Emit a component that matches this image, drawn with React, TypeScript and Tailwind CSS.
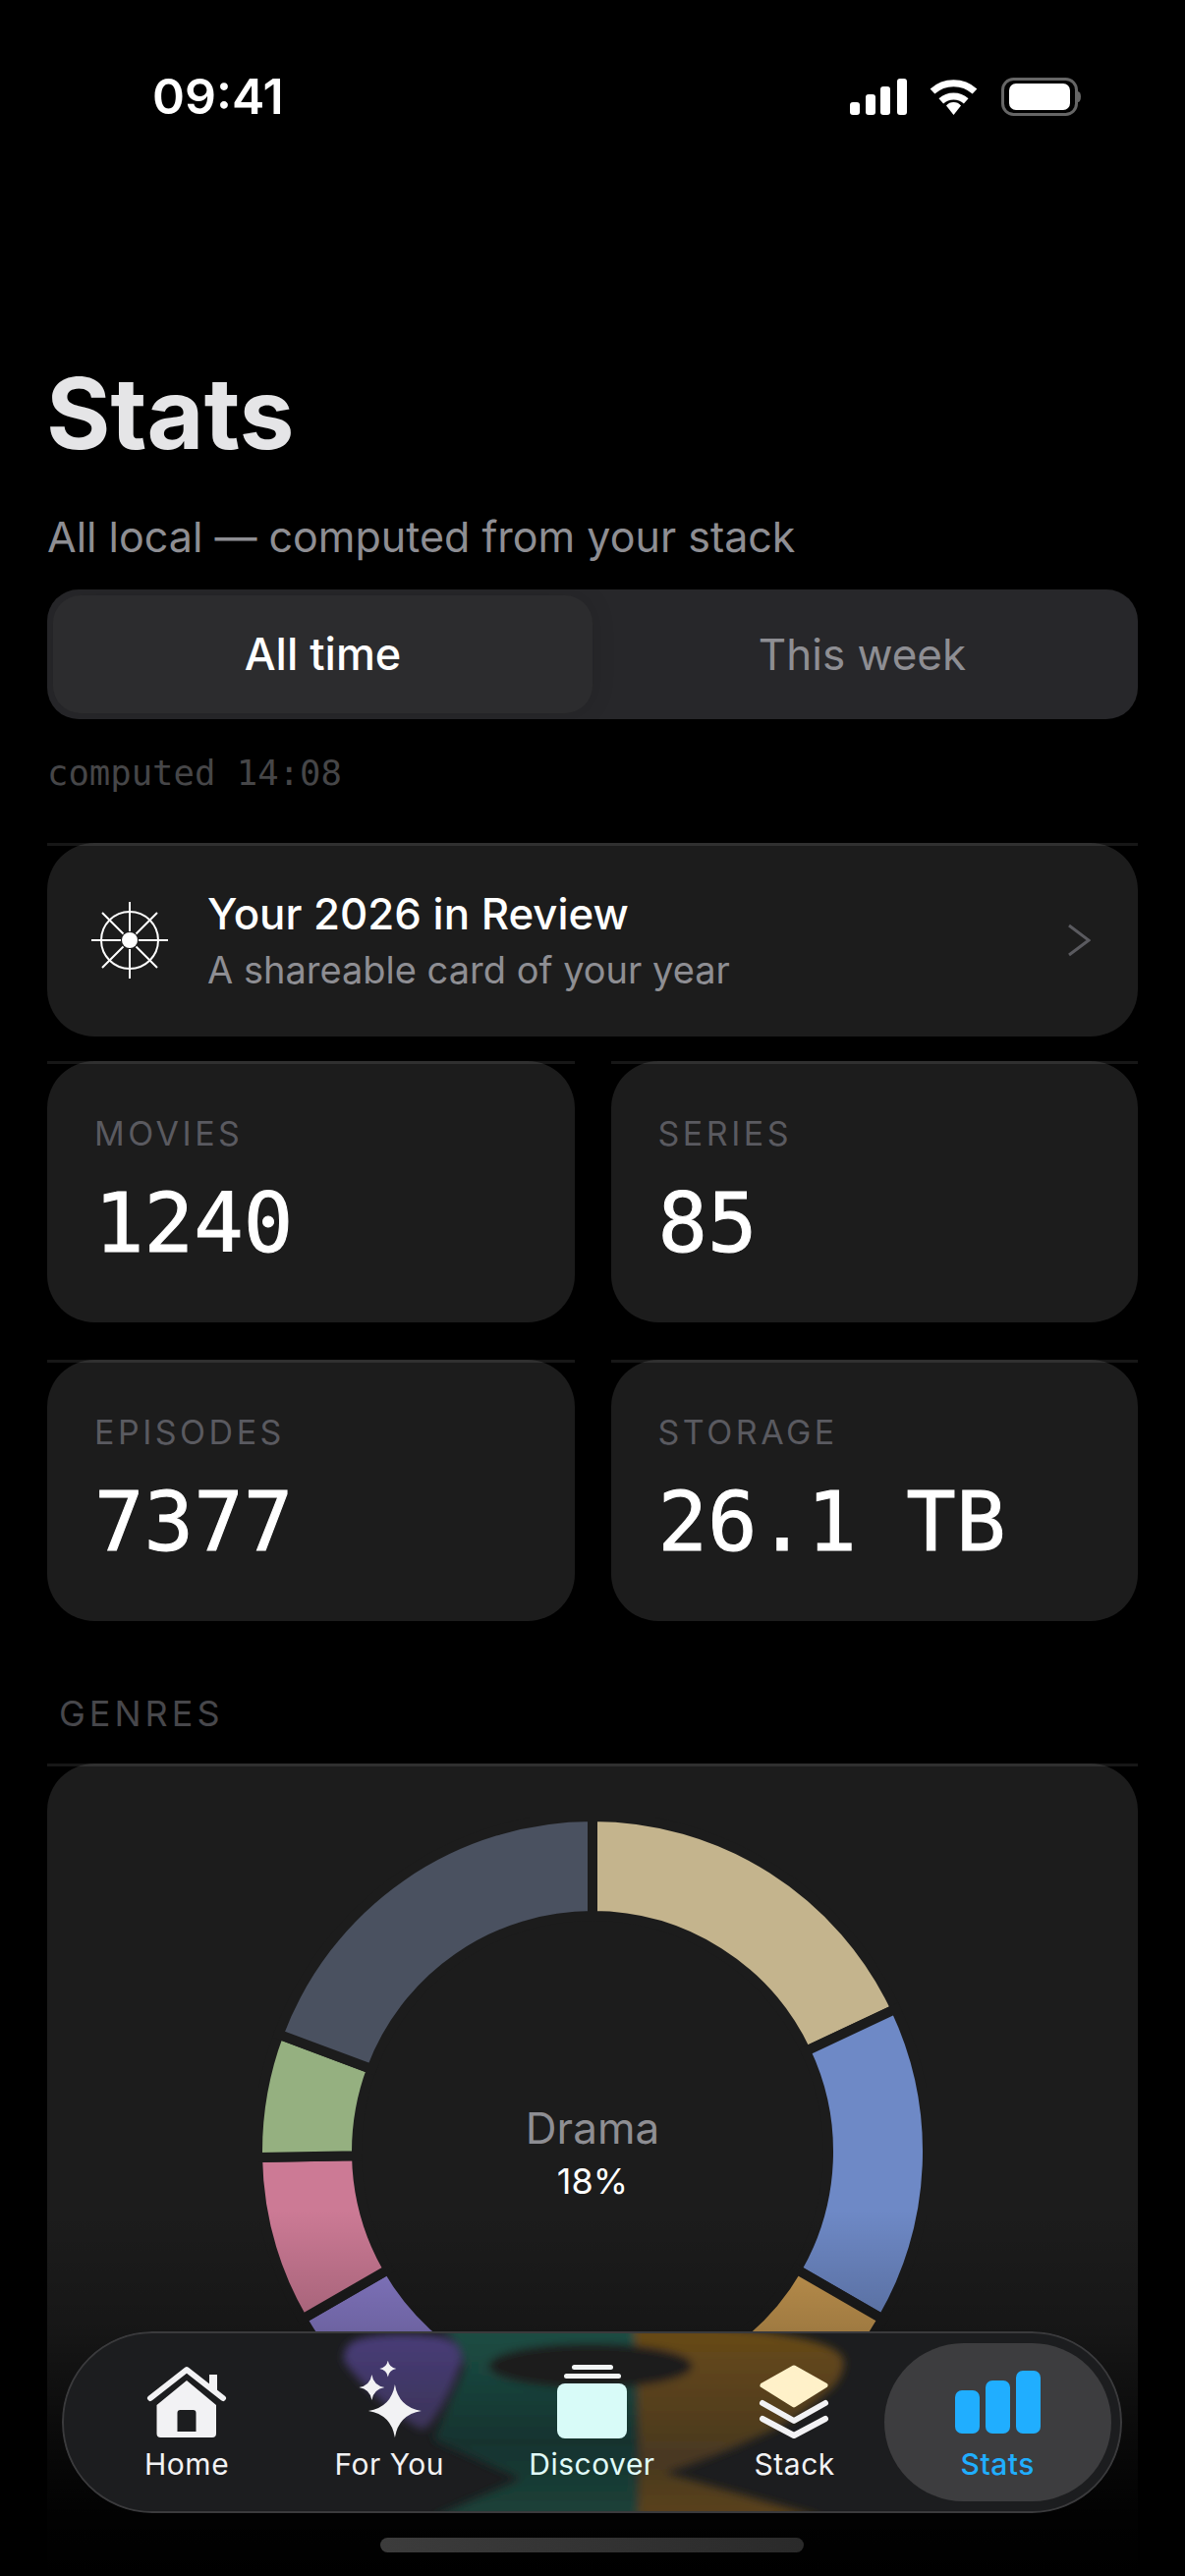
import React from "react";

const SEGMENTS = [
  { from: 0, to: 64.8, color: "#c4b48d" },
  { from: 64.8, to: 120, color: "#6e89c6" },
  { from: 120, to: 168, color: "#c99a52" },
  { from: 168, to: 205, color: "#1f7a68" },
  { from: 205, to: 240, color: "#8a7dcc" },
  { from: 240, to: 269, color: "#cc7a95" },
  { from: 269, to: 290.5, color: "#95b080" },
  { from: 290.5, to: 360, color: "#4a5160" },
];

function point(r: number, deg: number) {
  const a = (deg * Math.PI) / 180;
  return `${(340 + r * Math.sin(a)).toFixed(2)} ${(340 - r * Math.cos(a)).toFixed(2)}`;
}

function wedge(from: number, to: number) {
  const big = to - from > 180 ? 1 : 0;
  return `M${point(341, from)} A341 341 0 ${big} 1 ${point(341, to)} L${point(240, to)} A240 240 0 ${big} 0 ${point(240, from)} Z`;
}

function star(cx: number, cy: number, r: number) {
  const k = r * 0.14;
  return `M${cx} ${cy - r} Q${cx + k} ${cy - k} ${cx + r} ${cy} Q${cx + k} ${cy + k} ${cx} ${cy + r} Q${cx - k} ${cy + k} ${cx - r} ${cy} Q${cx - k} ${cy - k} ${cx} ${cy - r} Z`;
}

function StatusBar() {
  return (
    <div className="flex items-center justify-between pt-[78px] pl-[155px] pr-[106px]">
      <span className="text-[50px] leading-[40px] font-semibold text-white">09:41</span>
      <div className="flex items-center">
        <svg width="58" height="37" viewBox="0 0 58 37" fill="#fff">
          <rect x="0" y="24" width="10" height="13" rx="3" />
          <rect x="16" y="16" width="10" height="21" rx="3" />
          <rect x="31" y="8" width="10" height="29" rx="3" />
          <rect x="48" y="0" width="10" height="37" rx="3" />
        </svg>
        <svg className="ml-[22px]" width="51" height="37" viewBox="0 0 51 37" fill="none" stroke="#fff" strokeWidth="7">
          <path d="M4 13 A32 32 0 0 1 47 13" />
          <path d="M12.8 22.9 A19 19 0 0 1 38.2 22.9" />
          <path d="M25.5 37 L18 27.5 A10 10 0 0 1 33 27.5 Z" fill="#fff" stroke="none" />
        </svg>
        <svg className="ml-[23px]" width="81" height="39" viewBox="0 0 81 39">
          <rect x="1.5" y="1.5" width="75" height="36" rx="11" fill="none" stroke="#666" strokeWidth="3" />
          <rect x="8" y="6" width="62" height="27" rx="7" fill="#fff" />
          <path d="M78 14 a3 5.5 0 0 1 0 11 Z" fill="#666" />
        </svg>
      </div>
    </div>
  );
}

function CardLine() {
  return <div className="absolute inset-x-0 top-0 h-[3px] bg-white/[0.09]" />;
}

function StatCard({ label, value }: { label: string; value: string }) {
  return (
    <div className="relative h-[266px] rounded-[48px] bg-[#1c1c1c] pl-[48px] pt-[54px]">
      <CardLine />
      <div className="text-[34px] leading-[40px] tracking-[3.5px] text-[#5a5a60]">{label}</div>
      <div className="mt-[21px] font-['DejaVu_Sans_Mono',monospace] text-[84px] leading-[100px] text-white [-webkit-text-stroke:1px_#fff]">
        {value}
      </div>
    </div>
  );
}

function WheelIcon() {
  return (
    <svg width="80" height="80" viewBox="0 0 80 80" fill="none" stroke="#fff" strokeWidth="2">
      <circle cx="40" cy="40" r="29" />
      <circle cx="40" cy="40" r="8" fill="#fff" stroke="none" />
      <path d="M40 1 V31 M40 49 V79 M1 40 H31 M49 40 H79 M12 12 L33.5 33.5 M46.5 46.5 L68 68 M68 12 L46.5 33.5 M33.5 46.5 L12 68" />
    </svg>
  );
}

function HomeIcon() {
  return (
    <svg width="100" height="80" viewBox="0 0 100 80" fill="#f2f2f4">
      <path d="M13 38 L50 9 L87 38" fill="none" stroke="#f2f2f4" strokeWidth="6" strokeLinecap="round" strokeLinejoin="round" />
      <rect x="73" y="14" width="8" height="17" />
      <path
        fillRule="evenodd"
        d="M19.5 45 L50 20 L80 45 V74 a4 4 0 0 1 -4 4 H23.5 a4 4 0 0 1 -4 -4 Z M40.5 53 a3 3 0 0 1 3 -3 H56.5 a3 3 0 0 1 3 3 V72 H40.5 Z"
      />
    </svg>
  );
}

function SparklesIcon() {
  return (
    <svg width="100" height="80" viewBox="0 0 100 80" fill="#f2f2f4">
      <path d={star(55.9, 51, 27)} />
      <path d={star(32.4, 27, 13)} />
      <path d={star(48.8, 8, 8.5)} />
    </svg>
  );
}

function DiscoverIcon() {
  return (
    <svg width="100" height="80" viewBox="0 0 100 80">
      <rect x="30" y="4" width="42" height="5" rx="2.5" fill="#f2f5f5" />
      <rect x="22" y="13" width="58" height="5" rx="2.5" fill="#f2f5f5" />
      <rect x="15" y="23" width="71" height="56" rx="8" fill="#d8fbf8" />
    </svg>
  );
}

function StackIcon() {
  return (
    <svg width="100" height="80" viewBox="0 0 100 80" fill="none" strokeLinecap="round" strokeLinejoin="round">
      <path d="M49 7 L81 25 L49 45 L17 25 Z" fill="#fff1c9" stroke="#fff1c9" strokeWidth="5" />
      <path d="M17 43 L49 61 L81 43" stroke="#f2f2f4" strokeWidth="6" />
      <path d="M17 59 L49 76 L81 59" stroke="#f2f2f4" strokeWidth="6" />
    </svg>
  );
}

function StatsIcon() {
  return (
    <svg width="100" height="80" viewBox="0 0 100 80" fill="#20aeff">
      <rect x="7" y="30" width="25" height="44" rx="7" />
      <rect x="38" y="20" width="25" height="54" rx="7" />
      <rect x="69" y="10" width="25" height="64" rx="7" />
    </svg>
  );
}

function NavBlobs() {
  return (
    <svg className="absolute inset-0" width="1079" height="185" viewBox="0 0 1079 185">
      <defs>
        <filter id="soft" x="-10%" y="-10%" width="120%" height="120%">
          <feGaussianBlur stdDeviation="4" />
        </filter>
        <linearGradient id="teal" x1="0" y1="0" x2="0" y2="1">
          <stop offset="0" stopColor="#1a4f45" />
          <stop offset="0.6" stopColor="#19332f" />
          <stop offset="1" stopColor="#1a4239" />
        </linearGradient>
        <linearGradient id="brown" x1="0" y1="0" x2="0" y2="1">
          <stop offset="0" stopColor="#694a18" />
          <stop offset="0.7" stopColor="#483821" />
          <stop offset="1" stopColor="#5c4319" />
        </linearGradient>
        <linearGradient id="purple" x1="0" y1="0" x2="0" y2="1">
          <stop offset="0" stopColor="#483c78" />
          <stop offset="1" stopColor="#3b3458" />
        </linearGradient>
      </defs>
      <g filter="url(#soft)">
        <path d="M384 -5 H586 V190 H376 L467 150 L378 110 L409 40 Q412 15 384 -5 Z" fill="url(#teal)" />
        <path
          d="M582 -5 H661 Q790 5 796 30 Q796 50 776 64 Q750 90 709 107 Q660 130 614 144 L776 190 H586 Q590 100 582 -5 Z"
          fill="url(#brown)"
        />
        <path
          d="M287 30 Q285 12 305 7 Q335 0 384 5 Q407 10 407 30 Q395 65 380 87 Q372 100 366 100 Q350 92 332 77 Q300 50 287 30 Z"
          fill="url(#purple)"
        />
        <ellipse cx="538" cy="35" rx="104" ry="23" fill="#1c1d1f" />
      </g>
    </svg>
  );
}

function NavItem({ label, active, tint, children }: { label: string; active?: boolean; tint?: string; children: React.ReactNode }) {
  return (
    <div
      className={`flex flex-col items-center pt-[18px] ${
        active ? "-ml-[12px] w-[231px] rounded-[81px] bg-[#3d3d3f] text-[#20aeff] font-medium" : tint ?? "text-[#f2f2f4]"
      }`}
    >
      {children}
      <span className="mt-[5px] text-[30px] leading-[40px] tracking-[0.5px]">{label}</span>
    </div>
  );
}

export default function App() {
  return (
    <div className="relative h-[2622px] w-[1206px] overflow-hidden bg-black font-['Inter',sans-serif]">
      <StatusBar />

      <div className="px-[48px]">
        <h1 className="mt-[243px] -ml-[1px] text-[100px] leading-[120px] font-bold text-[#e5e5e7]">Stats</h1>
        <p className="mt-[35px] text-[43px] leading-[60px] text-[#8e8e93]">All local — computed from your stack</p>

        <div className="mt-[24px] flex h-[132px] rounded-[32px] bg-[#27272a] p-[6px]">
          <div className="flex w-[549px] items-center justify-center rounded-[28px] bg-[#2c2c2e] text-[45px] font-[450] text-white shadow-[0_0_24px_rgba(0,0,0,0.12)]">
            All time
          </div>
          <div className="flex flex-1 items-center justify-center text-[44px] font-normal text-[#8e8e93]">This week</div>
        </div>

        <div className="mt-[30px] font-['DejaVu_Sans_Mono',monospace] text-[35.6px] leading-[50px] text-[#464648]">
          computed 14:08
        </div>

        <div className="relative mt-[46px] flex h-[197px] items-center rounded-[48px] bg-[#1c1c1c] pl-[44px] pr-[48px]">
          <CardLine />
          <WheelIcon />
          <div className="ml-[39px] flex-1 pt-[2px]">
            <div className="text-[43.8px] leading-[56px] font-[450] text-white">Your 2026 in Review</div>
            <div className="mt-[3px] text-[38px] leading-[50px] text-[#8e8e93]">A shareable card of your year</div>
          </div>
          <svg width="24" height="34" viewBox="0 0 24 34" fill="none" stroke="#5a5a5f" strokeWidth="3">
            <path d="M2 2 L22 17 L2 32" />
          </svg>
        </div>

        <div className="mt-[25px] grid grid-cols-2 gap-x-[37px] gap-y-[38px]">
          <StatCard label="MOVIES" value="1240" />
          <StatCard label="SERIES" value="85" />
          <StatCard label="EPISODES" value="7377" />
          <StatCard label="STORAGE" value="26.1 TB" />
        </div>

        <div className="mt-[69px] pl-[12px] text-[36px] leading-[50px] tracking-[4px] text-[#47474b]">GENRES</div>

        <div className="relative mt-[26px] h-[900px] rounded-[48px] bg-[#1c1c1c] pt-[55px]">
          <CardLine />
          <div className="relative mx-auto h-[680px] w-[680px]">
            <svg width="680" height="680" viewBox="0 0 680 680">
              {SEGMENTS.map((s) => (
                <path key={s.from} d={wedge(s.from, s.to)} fill={s.color} stroke="#1c1c1c" strokeWidth="10" />
              ))}
            </svg>
            <div className="absolute inset-0 flex flex-col items-center justify-center pt-[6px]">
              <div className="text-[44px] leading-[54px] text-[#8e8e93]">Drama</div>
              <div className="text-[36px] leading-[54px] text-white">18%</div>
            </div>
          </div>
        </div>
      </div>

      {/* fade under the tab bar */}
      <div className="absolute inset-x-0 top-[2250px] h-[372px] bg-[linear-gradient(to_bottom,transparent_0%,rgba(0,0,0,0.2)_32%,rgba(0,0,0,0.65)_62%,rgba(0,0,0,0.93)_83%,#000_100%)]" />

      <div className="absolute left-[63px] top-[2373px] h-[185px] w-[1079px] overflow-hidden rounded-[92px] bg-[#1c1d1f]">
        <NavBlobs />
        <div className="absolute inset-0 rounded-[92px] border-2 border-[#3a3a3c]" />
        <div className="relative grid h-full grid-cols-5 px-[24px] py-[12px]">
          <NavItem label="Home">
            <HomeIcon />
          </NavItem>
          <NavItem label="For You">
            <SparklesIcon />
          </NavItem>
          <NavItem label="Discover" tint="text-[#e0fbf8]">
            <DiscoverIcon />
          </NavItem>
          <NavItem label="Stack">
            <StackIcon />
          </NavItem>
          <NavItem label="Stats" active>
            <StatsIcon />
          </NavItem>
        </div>
      </div>

      <div className="absolute left-[387px] top-[2583px] h-[15px] w-[431px] rounded-full bg-linear-to-r from-[#3c3c3c] to-[#2a2a2a]" />
    </div>
  );
}
